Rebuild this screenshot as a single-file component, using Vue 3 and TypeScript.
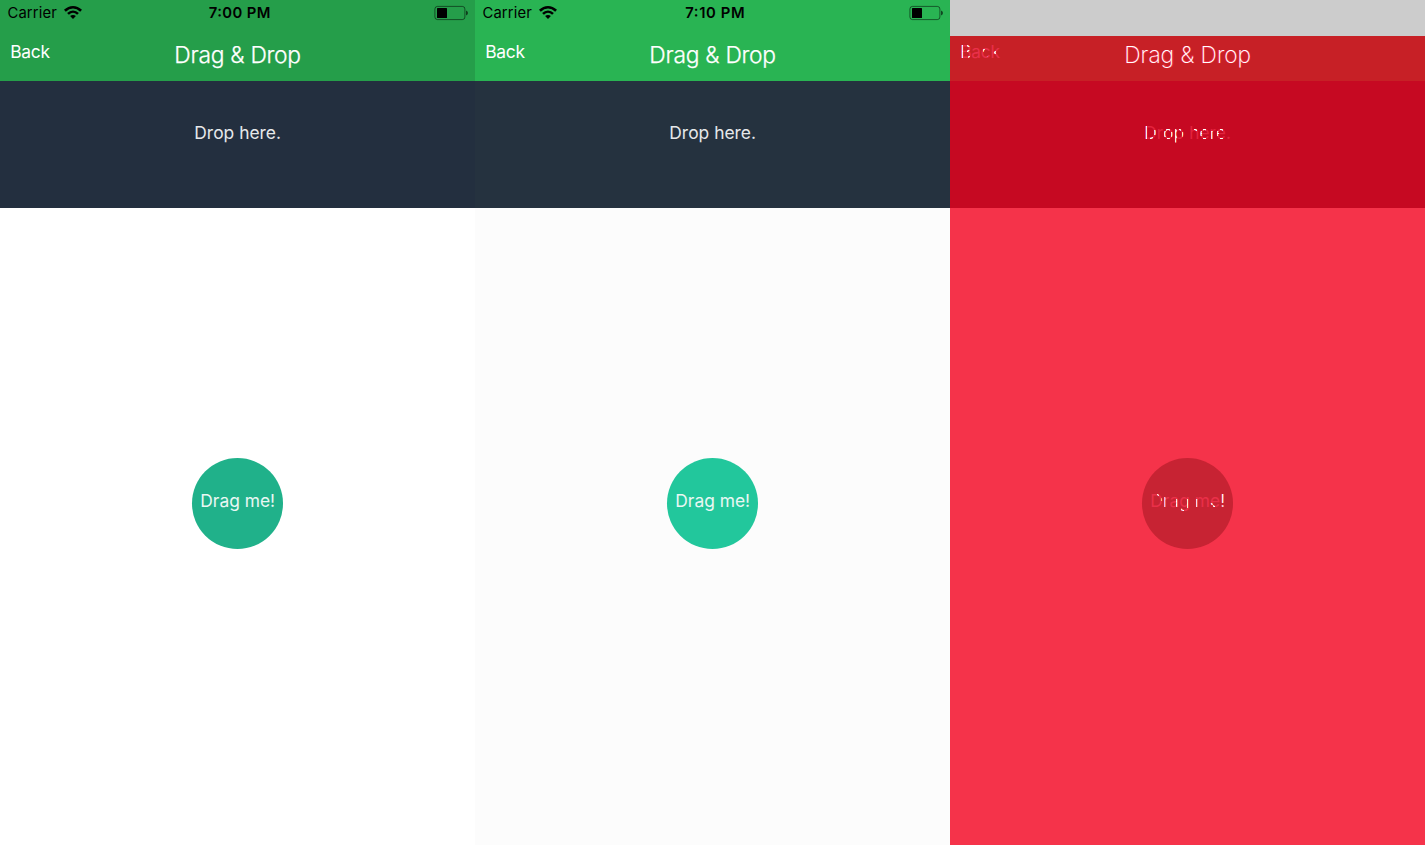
<script setup lang="ts">
interface Label {
  text: string
  x: number
  y: number
  size: number
  length: number
  /** Highlighted areas in the diff panel: left, top, width, height. */
  bands: number[][]
}

const navLabels: Label[] = [
  { text: 'Back', x: 10.2, y: 22, size: 17.4, length: 39.9, bands: [[11, 9, 2, 14], [17, 9, 3, 2], [17, 14, 3, 2], [18, 20, 2, 2], [33, 13, 2, 3], [36, 18, 2, 3], [44, 15, 2, 3]] },
  { text: 'Drag & Drop', x: 174.3, y: 27, size: 22.8, length: 126.8, bands: [] },
]
const dropLabel: Label = { text: 'Drop here.', x: 194.3, y: 58, size: 17.4, length: 86.7, bands: [[195, 45, 2, 14], [200, 56, 3, 3], [204, 49, 2, 5], [214, 50, 2, 6], [216, 48, 4, 2], [217, 57, 3, 2], [221, 51, 2, 5], [225, 48, 2, 15], [229, 48, 2, 2], [232, 51, 2, 5], [244, 48, 3, 2], [250, 50, 2, 5], [253, 48, 3, 2], [252, 53, 4, 2], [253, 57, 3, 2], [261, 50, 2, 8], [267, 50, 2, 5], [270, 48, 3, 2], [270, 53, 4, 2], [270, 57, 3, 2]] }
const dragLabel: Label = { text: 'Drag me!', x: 8.3, y: 49, size: 17.4, length: 74.8, bands: [[15, 35, 2, 3], [19, 40, 2, 3], [22, 39, 1.5, 11], [34, 41, 1.5, 8], [39, 50, 3, 3], [45, 41, 1.5, 9], [54, 41, 1.5, 8], [68, 45, 3, 2], [71, 47, 2, 2], [79, 35, 4, 15]] }

const panels = [
  { name: 'before', time: '7:00 PM', timeX: 208.7, timeLength: 61.6 },
  { name: 'after', time: '7:10 PM', timeX: 210.2, timeLength: 59.4 },
  { name: 'diff', time: '', timeX: 0, timeLength: 0 },
]
</script>

<template>
  <main class="comparison">
    <section v-for="panel in panels" :key="panel.name" class="panel" :class="panel.name">
      <div class="status">
        <svg v-if="panel.time" width="475" height="36" viewBox="0 0 475 36">
          <text x="7.5" y="18.4" font-size="14.8" textLength="49.3">Carrier</text>
          <g fill="none" stroke="#000" stroke-width="2.6">
            <path d="M64.9 10.8C69.8 6 76.2 6 81.1 10.8" />
            <path d="M68 13.9C71 11 75 11 78 13.9" />
          </g>
          <path d="M70.1 16C71.8 14.5 74.2 14.5 75.9 16L73 18.9Z" />
          <text :x="panel.timeX" y="18.4" font-size="14.8" font-weight="600" :textLength="panel.timeLength">{{ panel.time }}</text>
          <rect x="434.9" y="6.4" width="30" height="13.2" rx="2.6" fill="none" stroke="#000" stroke-opacity=".5" />
          <rect x="437" y="8" width="10" height="10" rx=".5" />
          <path d="M466 10.5Q468 11.2 468 13T466 15.5Z" fill-opacity=".6" />
        </svg>
      </div>
      <header class="nav">
        <svg width="475" height="45" viewBox="0 0 475 45">
          <template v-for="label in navLabels" :key="label.text">
            <text :x="label.x" :y="label.y" :font-size="label.size" :textLength="label.length" :class="{ title: label.size > 20 }">{{ label.text }}</text>
            <template v-if="panel.name === 'diff'">
              <text v-if="label.size > 20" class="hairline" :x="label.x" :y="label.y" :font-size="label.size" :textLength="label.length">{{ label.text }}</text>
              <template v-else>
                <clipPath id="back-bands"><rect v-for="(band, i) in label.bands" :key="i" :x="band[0]" :y="band[1]" :width="band[2]" :height="band[3]" /></clipPath>
                <text class="spark" clip-path="url(#back-bands)" :x="label.x" :y="label.y" :font-size="label.size" :textLength="label.length">{{ label.text }}</text>
              </template>
            </template>
          </template>
        </svg>
      </header>
      <div class="drop-zone">
        <svg width="475" height="127" viewBox="0 0 475 127">
          <text :x="dropLabel.x" :y="dropLabel.y" :font-size="dropLabel.size" :textLength="dropLabel.length">{{ dropLabel.text }}</text>
          <template v-if="panel.name === 'diff'">
            <clipPath id="drop-bands"><rect v-for="(band, i) in dropLabel.bands" :key="i" :x="band[0]" :y="band[1]" :width="band[2]" :height="band[3]" /></clipPath>
            <text class="spark" clip-path="url(#drop-bands)" :x="dropLabel.x" :y="dropLabel.y" :font-size="dropLabel.size" :textLength="dropLabel.length">{{ dropLabel.text }}</text>
          </template>
        </svg>
      </div>
      <div class="canvas">
        <div class="ball">
          <svg width="91" height="91" viewBox="0 0 91 91">
            <text :x="dragLabel.x" :y="dragLabel.y" :font-size="dragLabel.size" :textLength="dragLabel.length">{{ dragLabel.text }}</text>
            <template v-if="panel.name === 'diff'">
              <clipPath id="drag-bands"><rect v-for="(band, i) in dragLabel.bands" :key="i" :x="band[0]" :y="band[1]" :width="band[2]" :height="band[3]" /></clipPath>
              <text class="spark" clip-path="url(#drag-bands)" :x="dragLabel.x" :y="dragLabel.y" :font-size="dragLabel.size" :textLength="dragLabel.length">{{ dragLabel.text }}</text>
            </template>
          </svg>
        </div>
      </div>
    </section>
  </main>
</template>

<style>
body { margin: 0; overflow: hidden; }
</style>

<style scoped>
.comparison {
  display: flex;
  width: 1425px;
  height: 845px;
  font-family: Inter, Roboto, sans-serif;
}
.panel {
  display: flex;
  flex-direction: column;
  width: 475px;
  height: 845px;
}
svg { display: block; }
.status { height: 36px; }
.nav { height: 45px; color: #fff; }
.drop-zone { height: 127px; color: #e6e8ea; }
.canvas {
  flex: 1;
  display: flex;
  justify-content: center;
  align-items: flex-start;
  padding-top: 250px;
}
.ball {
  width: 91px;
  height: 91px;
  border-radius: 50%;
  color: #e9f7f3;
}
.nav text, .drop-zone text, .ball text { fill: currentColor; font-weight: 400; }
.nav .title { font-weight: 300; stroke: currentColor; stroke-width: .25px; }
.before .status, .before .nav { background: #259e4a; }
.before .drop-zone { background: #232f3f; }
.before .canvas { background: #fff; }
.before .ball { background: #20b18a; }
.after .status, .after .nav { background: #29b453; }
.after .drop-zone { background: #25323f; }
.after .canvas { background: #fcfcfc; }
.after .ball { background: #22c79c; }
.diff .status { background: #ccc; }
.diff .nav { background: #c72026; color: #e9304a; }
.diff .drop-zone { background: #c60922; color: #e2233e; }
.diff .canvas { background: #f5334a; }
.diff .ball { background: #c72333; color: #ea3049; }
.diff .nav .title { font-weight: 400; }
.diff .nav .hairline { fill: #fff; font-weight: 200; }
.diff text.spark { fill: #fff; font-weight: 300; }
</style>
